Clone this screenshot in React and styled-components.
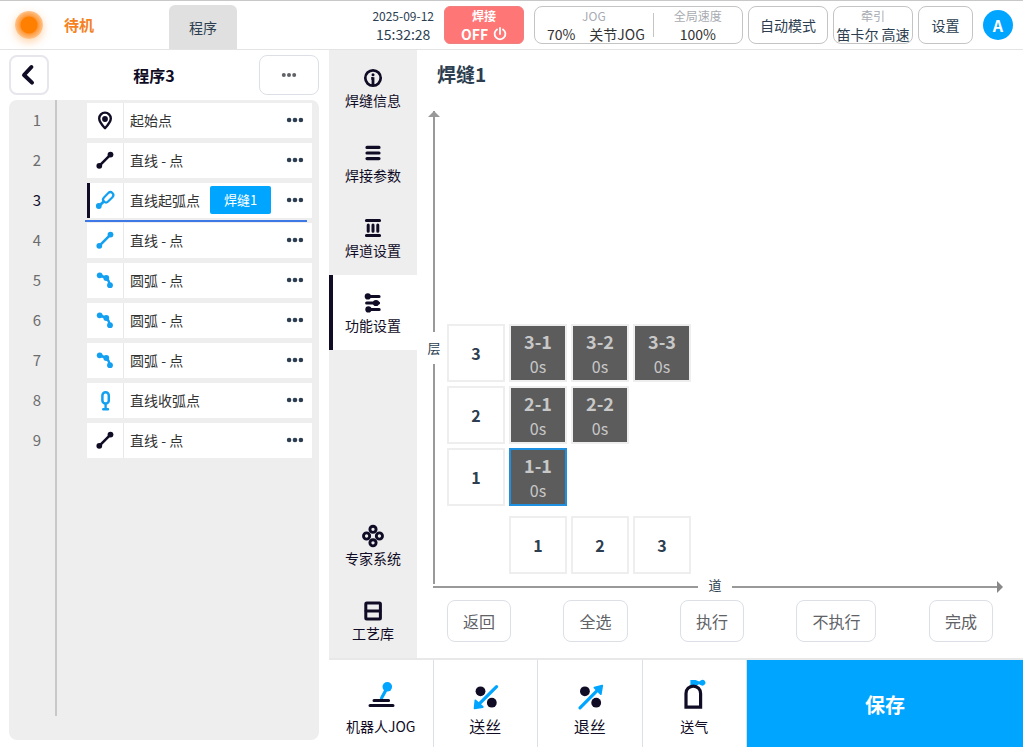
import React, { useState } from "react";
import styled, { createGlobalStyle, css } from "styled-components";

const INK = "#100c26";
const TEXT = "#2c3e50";
const BLUE = "#00a5ff";

const GlobalStyle = createGlobalStyle`
  * {
    box-sizing: border-box;
  }

  body {
    margin: 0;
    background: #fff;
    color: ${TEXT};
    font-family: "Noto Sans CJK SC", "Noto Sans", sans-serif;
    font-size: 14px;
    line-height: 20px;
  }

  button {
    margin: 0;
    padding: 0;
    border: 0;
    background: none;
    color: inherit;
    font: inherit;
    white-space: nowrap;
    cursor: pointer;
  }

  svg {
    display: block;
    flex: none;
  }
`;

const Page = styled.div`
  display: flex;
  flex-direction: column;
  height: 100vh;
  min-height: 700px;
`;

/* top bar */

const Header = styled.header`
  display: flex;
  align-items: center;
  flex: none;
  height: 50px;
  padding: 0 10px 0 15px;
  border-top: 1px solid #c8c8c8;
  border-bottom: 1px solid #e4e4e4;
`;

const Lamp = styled.span`
  width: 28px;
  height: 28px;
  border-radius: 50%;
  background: radial-gradient(circle, #ff8000 0 8px, #ff9a3c 9px, #ffc48c 14px);
  box-shadow: 0 3px 8px rgba(255, 128, 0, 0.35);
`;

const Status = styled.strong`
  width: 105px;
  padding-left: 21px;
  color: #f5821f;
  font-size: 15px;
`;

const Tab = styled.button`
  align-self: flex-end;
  width: 68px;
  height: 44px;
  margin-left: 21px;
  border-radius: 6px 6px 0 0;
  background: #e0e0e0;
`;

const HeaderRight = styled.div`
  display: flex;
  align-items: center;
  gap: 5px;
  margin-left: auto;
`;

const Clock = styled.div`
  margin-right: 5px;
  text-align: center;
  line-height: 18px;
`;

const Small = styled.div`
  color: ${(p) => p.$color || "inherit"};
  font-size: 12px;
`;

const WeldSwitch = styled.button`
  width: 80px;
  height: 38px;
  margin-right: 5px;
  border: 1px solid #f08080;
  border-radius: 6px;
  background: #ff7676;
  color: #fff;
  font-weight: 700;
  line-height: 18px;
`;

const Inline = styled.div`
  display: flex;
  align-items: center;
  justify-content: center;
  gap: ${(p) => p.$gap}px;
`;

const boxed = css`
  height: 38px;
  border: 1px solid #c4c4c4;
  border-radius: 8px;
  line-height: 18px;
`;

const HeaderButton = styled.button`
  ${boxed}
  width: ${(p) => p.$width}px;
`;

const JogBox = styled.div`
  ${boxed}
  display: flex;
  align-items: center;
  width: 209px;
  color: #333;
  text-align: center;
`;

const JogPart = styled.div`
  flex: ${(p) => p.$grow};
`;

const JogValues = styled(Inline)`
  padding-left: 4px;
`;

const JogDivider = styled.div`
  width: 1px;
  height: 24px;
  background: #c4c4c4;
`;

const Avatar = styled.button`
  width: 30px;
  height: 30px;
  margin-left: 5px;
  border-radius: 50%;
  background: ${BLUE};
  color: #fff;
  font-size: 16px;
  font-weight: 700;
`;

/* program panel */

const Body = styled.div`
  display: flex;
  flex: 1;
  min-height: 0;
`;

const ProgramPanel = styled.section`
  display: flex;
  flex-direction: column;
  flex: none;
  width: 329px;
  padding: 0 10px 7px 9px;
`;

const ProgramHead = styled.div`
  display: flex;
  align-items: center;
  justify-content: space-between;
  height: 50px;
`;

const BackButton = styled.button`
  display: flex;
  align-items: center;
  justify-content: center;
  width: 40px;
  height: 40px;
  border: 2px solid #e6e6ec;
  border-radius: 8px;
`;

const ProgramTitle = styled.h2`
  margin: 0;
  color: ${INK};
  font-size: 16px;
`;

const MoreButton = styled.button`
  display: flex;
  align-items: center;
  justify-content: center;
  width: 60px;
  height: 40px;
  border: 1px solid #dcdfe6;
  border-radius: 8px;
`;

const StepList = styled.div`
  display: flex;
  flex: 1;
  padding-right: 7px;
  border-radius: 8px;
  background: #eee;
`;

const Numbers = styled.div`
  display: flex;
  flex-direction: column;
  width: 46px;
  padding: 3px 0 0 10px;
  gap: 5px;
`;

const StepNumber = styled.div`
  padding-bottom: 2px;
  color: ${(p) => (p.$active ? INK : "#6c6c6c")};
  font-size: 15px;
  line-height: 33px;
  text-align: center;
`;

const Rail = styled.div`
  width: 2px;
  margin: 0 30px 24px 0;
  background: #c8c8c8;
`;

const Steps = styled.div`
  display: flex;
  flex-direction: column;
  flex: 1;
  gap: 5px;
  padding-top: 3px;
`;

const Step = styled.div`
  position: relative;
  display: flex;
  align-items: center;
  height: 35px;
  padding-bottom: 1px;
  background: #fff;
  color: #333;
  box-shadow: ${(p) => (p.$active ? `inset 3px 0 ${INK}` : "none")};
`;

const InsertMark = styled.div`
  position: absolute;
  right: 5px;
  bottom: -4px;
  left: -2px;
  z-index: 1;
  height: 2px;
  background: #3d78e6;
`;

const StepIcon = styled.div`
  display: flex;
  align-items: center;
  align-self: flex-start;
  justify-content: center;
  width: 37px;
  height: 35px;
  border-right: 1px solid #e8e8e8;
`;

const StepName = styled.span`
  padding: 0 0 1px 6px;
`;

const SeamTag = styled.button`
  width: 61px;
  height: 28px;
  margin-left: 10px;
  border-radius: 2px;
  background: ${BLUE};
  color: #fff;
  font-size: 13px;
`;

const StepMenu = styled.button`
  margin: 0 8px 0 auto;
`;

/* right part */

const Workspace = styled.div`
  display: flex;
  flex-direction: column;
  flex: 1;
  min-width: 0;
`;

const Upper = styled.div`
  display: flex;
  flex: 1;
  border-bottom: 2px solid #e8e8e8;
`;

const Sidebar = styled.nav`
  display: flex;
  flex-direction: column;
  flex: none;
  width: 88px;
  background: #eee;
`;

const SideItem = styled.button`
  display: flex;
  flex-direction: column;
  align-items: center;
  height: 75px;
  padding-top: 16px;
  background: ${(p) => (p.$active ? "#fff" : "transparent")};
  box-shadow: ${(p) => (p.$active ? `inset 4px 0 ${INK}` : "none")};
  color: ${INK};
  line-height: 20px;
`;

const Spacer = styled.div`
  flex: 1;
`;

const Main = styled.main`
  display: flex;
  flex-direction: column;
  flex: 1;
  min-width: 0;
  padding: 0 20px 16px 10px;
`;

const SeamTitle = styled.h1`
  height: 61px;
  margin: 0;
  padding: 10px 0 0 10px;
  font-size: 19px;
  line-height: 28px;
`;

const Chart = styled.div`
  display: flex;
  flex: 1;
`;

const AxisY = styled.div`
  display: flex;
  flex-direction: column;
  align-items: center;
  width: 14px;
  margin-right: 6px;
`;

const ArrowUp = styled.div`
  margin-bottom: -6px;
  border: 6px solid transparent;
  border-top: 0;
  border-bottom-color: #999;
`;

const LineY = styled.div`
  flex: 1;
  width: 2px;
  background: #999;
`;

const LabelY = styled.div`
  font-size: 13px;
  line-height: 32px;
`;

const AxisX = styled.div`
  display: flex;
  align-items: center;
  height: 6px;
  margin-left: 6px;
`;

const LineX = styled.div`
  flex: 1;
  height: 2px;
  background: #999;
`;

const LabelX = styled.div`
  width: 34px;
  padding-bottom: 4px;
  font-size: 13px;
  text-align: center;
`;

const ArrowRight = styled.div`
  border: 6px solid transparent;
  border-right: 0;
  border-left-color: #888;
`;

const BeadMap = styled.div`
  display: flex;
  flex-direction: column;
  justify-content: flex-end;
  gap: 4px;
  padding-bottom: 10px;
`;

const BeadRow = styled.div`
  display: flex;
  gap: 4px;
  padding: ${(p) => (p.$axis ? "6px 0 0 62px" : "0")};
`;

const Index = styled.div`
  width: 58px;
  height: 58px;
  border: 2px solid #eee;
  font-size: 16px;
  font-weight: 700;
  line-height: 54px;
  text-align: center;
`;

const Bead = styled.button`
  width: 58px;
  height: 58px;
  padding-top: 2px;
  border: 2px solid ${(p) => (p.$selected ? "#1f8fdf" : "#eee")};
  background: #5c5c5c;
  color: #c8c8c8;
  font-size: 16px;
  line-height: 25px;
`;

const BeadName = styled.div`
  font-size: 18px;
  font-weight: 700;
`;

const Actions = styled.div`
  display: flex;
  justify-content: space-between;
  margin: 10px 10px 0 20px;
`;

const Action = styled.button`
  height: 42px;
  padding: 0 15px;
  border: 1px solid #dcdfe6;
  border-radius: 8px;
  color: #606266;
  font-size: 16px;
`;

const Footer = styled.footer`
  display: grid;
  flex: none;
  grid-template-columns: repeat(4, 15fr) 40fr;
  column-gap: 1px;
  height: 87px;
  background: #dcdfe6;
`;

const Tool = styled.button`
  display: flex;
  flex-direction: column;
  align-items: center;
  gap: 4px;
  padding-top: 19px;
  background: #fff;
  color: ${INK};
  font-size: ${(p) => p.$size}px;
  line-height: 22px;
`;

const SaveButton = styled.button`
  padding-top: 2px;
  background: ${BLUE};
  color: #fff;
  font-size: 20px;
  font-weight: 700;
`;

/* icons */

function Icon({ size = 24, color = INK, children }) {
  return (
    <svg
      width={size}
      height={size}
      viewBox={`0 0 ${size} ${size}`}
      fill="none"
      stroke={color}
      strokeLinecap="round"
      strokeLinejoin="round"
      aria-hidden="true"
    >
      {children}
    </svg>
  );
}

function Dots({ r = 2.3, gap = 5.9, color = TEXT }) {
  return (
    <svg width="18" height="8" viewBox="-9 -4 18 8" fill={color} aria-hidden="true">
      <circle cx={-gap} r={r} />
      <circle r={r} />
      <circle cx={gap} r={r} />
    </svg>
  );
}

const stepIcons = {
  start: (
    <Icon>
      <path
        strokeWidth="2.4"
        d="M12 19.2C9 15.9 6.2 12.6 6.2 9.4a5.8 5.8 0 0 1 11.6 0C17.8 12.6 15 15.9 12 19.2Z"
      />
      <circle cx="12" cy="10" r="2.9" fill={INK} stroke="none" />
    </Icon>
  ),
  line: <LineIcon color={INK} />,
  weldLine: <LineIcon color="#14a0f0" />,
  arcOn: (
    <Icon color="#14a0f0">
      <path strokeWidth="2.8" d="M5.5 17.5L10.5 12.8" />
      <circle cx="5.8" cy="17" r="2.9" fill="#14a0f0" stroke="none" />
      <rect
        x="9.2"
        y="5.4"
        width="12"
        height="5.8"
        rx="2.9"
        strokeWidth="2.2"
        transform="rotate(-45 15.2 8.3)"
      />
    </Icon>
  ),
  arc: (
    <Icon color="#14a0f0">
      <path strokeWidth="2.6" d="M6.7 6.3L13.3 9Q16.2 11.6 17 16.2" />
      <g fill="#14a0f0" stroke="none">
        <circle cx="6.7" cy="6.3" r="2.9" />
        <circle cx="13.3" cy="9" r="2.9" />
        <circle cx="17" cy="16.2" r="2.9" />
      </g>
    </Icon>
  ),
  arcOff: (
    <Icon color="#14a0f0">
      <rect x="9.4" y="3.2" width="6.4" height="11.4" rx="3.2" strokeWidth="2.5" />
      <path strokeWidth="2.4" d="M12.6 15v5M10.2 20.2h4.8" />
    </Icon>
  ),
};

function LineIcon({ color }) {
  return (
    <Icon color={color}>
      <path strokeWidth="2.6" d="M6.3 16.8L17.5 5.6" />
      <circle cx="6.3" cy="16.8" r="2.9" fill={color} stroke="none" />
      <circle cx="17.5" cy="5.6" r="2.9" fill={color} stroke="none" />
    </Icon>
  );
}

const InfoIcon = (
  <Icon>
    <circle cx="12" cy="12" r="7.7" strokeWidth="2.7" />
    <circle cx="12" cy="8.8" r="1.5" fill={INK} stroke="none" />
    <path strokeWidth="2.8" strokeLinecap="butt" d="M12 11.2v8M10.2 12.4h2" />
  </Icon>
);

const MenuIcon = (
  <Icon>
    <path strokeWidth="3.2" d="M6 6.4h12M6 12h12M6 17.6h12" />
  </Icon>
);

const BeadIcon = (
  <Icon>
    <path strokeWidth="3" d="M5.4 4.6h13.2M5.4 19.6h13.2M7.2 9v6.2M12 9v6.2M16.8 9v6.2" />
  </Icon>
);

const SlidersIcon = (
  <Icon>
    <path strokeWidth="3" d="M6.5 5.6h11.6M5.6 12h12M7 18.4h11.2" />
    <g fill={INK} stroke="none">
      <circle cx="6.8" cy="5.4" r="3.1" />
      <circle cx="15" cy="12" r="3.1" />
      <circle cx="7.4" cy="18.4" r="3.1" />
    </g>
  </Icon>
);

const ExpertIcon = (
  <Icon>
    <g strokeWidth="2.9">
      <circle cx="12" cy="5.3" r="3.1" />
      <circle cx="5.6" cy="12" r="3.1" />
      <circle cx="18.4" cy="12" r="3.1" />
      <circle cx="12" cy="18.8" r="3.1" />
    </g>
  </Icon>
);

const LibraryIcon = (
  <Icon>
    <rect x="4.8" y="4" width="14.6" height="16" rx="1" strokeWidth="3" />
    <path strokeWidth="2.8" d="M5 12h14" />
  </Icon>
);

const JogIcon = (
  <Icon size={32}>
    <path stroke={BLUE} strokeWidth="3.2" d="M22 9l-5.4 10" />
    <circle cx="22.3" cy="7.8" r="4.8" fill={BLUE} stroke="none" />
    <path strokeWidth="3" d="M9 21.4h14.6M5 26.4h23" />
  </Icon>
);

const FeedIcon = (
  <Icon size={32}>
    <circle cx="11.5" cy="12.3" r="4.9" fill={INK} stroke="none" />
    <circle cx="22.8" cy="23.7" r="4.9" fill={INK} stroke="none" />
    <path stroke={BLUE} strokeWidth="3.2" d="M27.6 7.6L10 25.2" />
    <path stroke={BLUE} strokeWidth="1.8" fill={BLUE} d="M5.6 29.4l.8-8 7.4 6.6Z" />
  </Icon>
);

const RetractIcon = (
  <Icon size={32}>
    <circle cx="10.9" cy="12.3" r="4.9" fill={INK} stroke="none" />
    <circle cx="22.2" cy="23.7" r="4.9" fill={INK} stroke="none" />
    <path stroke={BLUE} strokeWidth="3.2" d="M6 28.8L23.6 11.2" />
    <path stroke={BLUE} strokeWidth="1.8" fill={BLUE} d="M28.2 6.6l-7.8 2 6.4 6.4Z" />
  </Icon>
);

const GasIcon = (
  <Icon size={32}>
    <path
      fill={BLUE}
      stroke="none"
      d="M12.4 1h5.2l3.6 1.6L23 1.2a2.9 2.9 0 1 1 0 5L21 5.2 18 7h-5.6Z"
    />
    <path
      strokeWidth="3.2"
      strokeLinejoin="miter"
      d="M8 28.2V14.4a7.3 7.3 0 0 1 14.6 0v13.8Z"
    />
  </Icon>
);

const steps = [
  { name: "起始点", icon: "start" },
  { name: "直线 - 点", icon: "line" },
  { name: "直线起弧点", icon: "arcOn", seam: "焊缝1" },
  { name: "直线 - 点", icon: "weldLine" },
  { name: "圆弧 - 点", icon: "arc" },
  { name: "圆弧 - 点", icon: "arc" },
  { name: "圆弧 - 点", icon: "arc" },
  { name: "直线收弧点", icon: "arcOff" },
  { name: "直线 - 点", icon: "line" },
];

const topMenu = [
  ["焊缝信息", InfoIcon],
  ["焊接参数", MenuIcon],
  ["焊道设置", BeadIcon],
  ["功能设置", SlidersIcon],
];

const bottomMenu = [
  ["专家系统", ExpertIcon],
  ["工艺库", LibraryIcon],
];

const layers = [
  { layer: 3, beads: 3 },
  { layer: 2, beads: 2 },
  { layer: 1, beads: 1 },
];

const tools = [
  ["机器人JOG", JogIcon, 14],
  ["送丝", FeedIcon, 16],
  ["退丝", RetractIcon, 16],
  ["送气", GasIcon, 14],
];

function TopBar() {
  return (
    <Header>
      <Lamp />
      <Status>待机</Status>
      <Tab>程序</Tab>
      <HeaderRight>
        <Clock>
          <Small>2025-09-12</Small>
          <div>15:32:28</div>
        </Clock>
        <WeldSwitch>
          <Small>焊接</Small>
          <Inline $gap={5}>
            OFF
            <svg
              width="14"
              height="14"
              viewBox="0 0 14 14"
              fill="none"
              stroke="#fff"
              strokeWidth="1.8"
              strokeLinecap="round"
              aria-hidden="true"
            >
              <path d="M7 1v6M4 2.4a5.4 5.4 0 1 0 6 0" />
            </svg>
          </Inline>
        </WeldSwitch>
        <JogBox>
          <JogPart $grow={4}>
            <Small $color="#a8abb2">JOG</Small>
            <JogValues $gap={14}>
              <span>70%</span>
              <span>关节JOG</span>
            </JogValues>
          </JogPart>
          <JogDivider />
          <JogPart $grow={3}>
            <Small $color="#a8abb2">全局速度</Small>
            <div>100%</div>
          </JogPart>
        </JogBox>
        <HeaderButton $width={80}>自动模式</HeaderButton>
        <HeaderButton $width={80}>
          <Small $color="#a8abb2">牵引</Small>
          <div>笛卡尔 高速</div>
        </HeaderButton>
        <HeaderButton $width={55}>设置</HeaderButton>
        <Avatar>A</Avatar>
      </HeaderRight>
    </Header>
  );
}

function Program({ current, onSelect }) {
  return (
    <ProgramPanel>
      <ProgramHead>
        <BackButton aria-label="返回">
          <Icon>
            <path strokeWidth="4" d="M14.4 4L7 12l8 7.6" />
          </Icon>
        </BackButton>
        <ProgramTitle>程序3</ProgramTitle>
        <MoreButton aria-label="更多">
          <Dots r={2} gap={5.2} color="#606266" />
        </MoreButton>
      </ProgramHead>
      <StepList>
        <Numbers>
          {steps.map((step, i) => (
            <StepNumber key={i} $active={i === current}>
              {i + 1}
            </StepNumber>
          ))}
        </Numbers>
        <Rail />
        <Steps>
          {steps.map((step, i) => (
            <Step key={i} $active={i === current} onClick={() => onSelect(i)}>
              <StepIcon>{stepIcons[step.icon]}</StepIcon>
              <StepName>{step.name}</StepName>
              {step.seam && <SeamTag>{step.seam}</SeamTag>}
              <StepMenu aria-label="更多">
                <Dots />
              </StepMenu>
              {i === current && <InsertMark />}
            </Step>
          ))}
        </Steps>
      </StepList>
    </ProgramPanel>
  );
}

function App() {
  const [current, setCurrent] = useState(2);
  const [page, setPage] = useState("功能设置");
  const [bead, setBead] = useState("1-1");

  const renderItem = ([label, icon]) => (
    <SideItem key={label} $active={label === page} onClick={() => setPage(label)}>
      {icon}
      {label}
    </SideItem>
  );

  return (
    <Page>
      <GlobalStyle />
      <TopBar />
      <Body>
        <Program current={current} onSelect={setCurrent} />
        <Workspace>
          <Upper>
            <Sidebar>
              {topMenu.map(renderItem)}
              <Spacer />
              {bottomMenu.map(renderItem)}
            </Sidebar>
            <Main>
              <SeamTitle>焊缝1</SeamTitle>
              <Chart>
                <AxisY>
                  <ArrowUp />
                  <LineY />
                  <LabelY>层</LabelY>
                  <LineY />
                </AxisY>
                <BeadMap>
                  {layers.map(({ layer, beads }) => (
                    <BeadRow key={layer}>
                      <Index>{layer}</Index>
                      {Array.from({ length: beads }, (_, i) => {
                        const name = `${layer}-${i + 1}`;
                        return (
                          <Bead
                            key={name}
                            $selected={name === bead}
                            onClick={() => setBead(name)}
                          >
                            <BeadName>{name}</BeadName>
                            <div>0s</div>
                          </Bead>
                        );
                      })}
                    </BeadRow>
                  ))}
                  <BeadRow $axis>
                    <Index>1</Index>
                    <Index>2</Index>
                    <Index>3</Index>
                  </BeadRow>
                </BeadMap>
              </Chart>
              <AxisX>
                <LineX />
                <LabelX>道</LabelX>
                <LineX />
                <ArrowRight />
              </AxisX>
              <Actions>
                <Action>返回</Action>
                <Action>全选</Action>
                <Action>执行</Action>
                <Action>不执行</Action>
                <Action>完成</Action>
              </Actions>
            </Main>
          </Upper>
          <Footer>
            {tools.map(([label, icon, size]) => (
              <Tool key={label} $size={size}>
                {icon}
                {label}
              </Tool>
            ))}
            <SaveButton>保存</SaveButton>
          </Footer>
        </Workspace>
      </Body>
    </Page>
  );
}

export default App;
